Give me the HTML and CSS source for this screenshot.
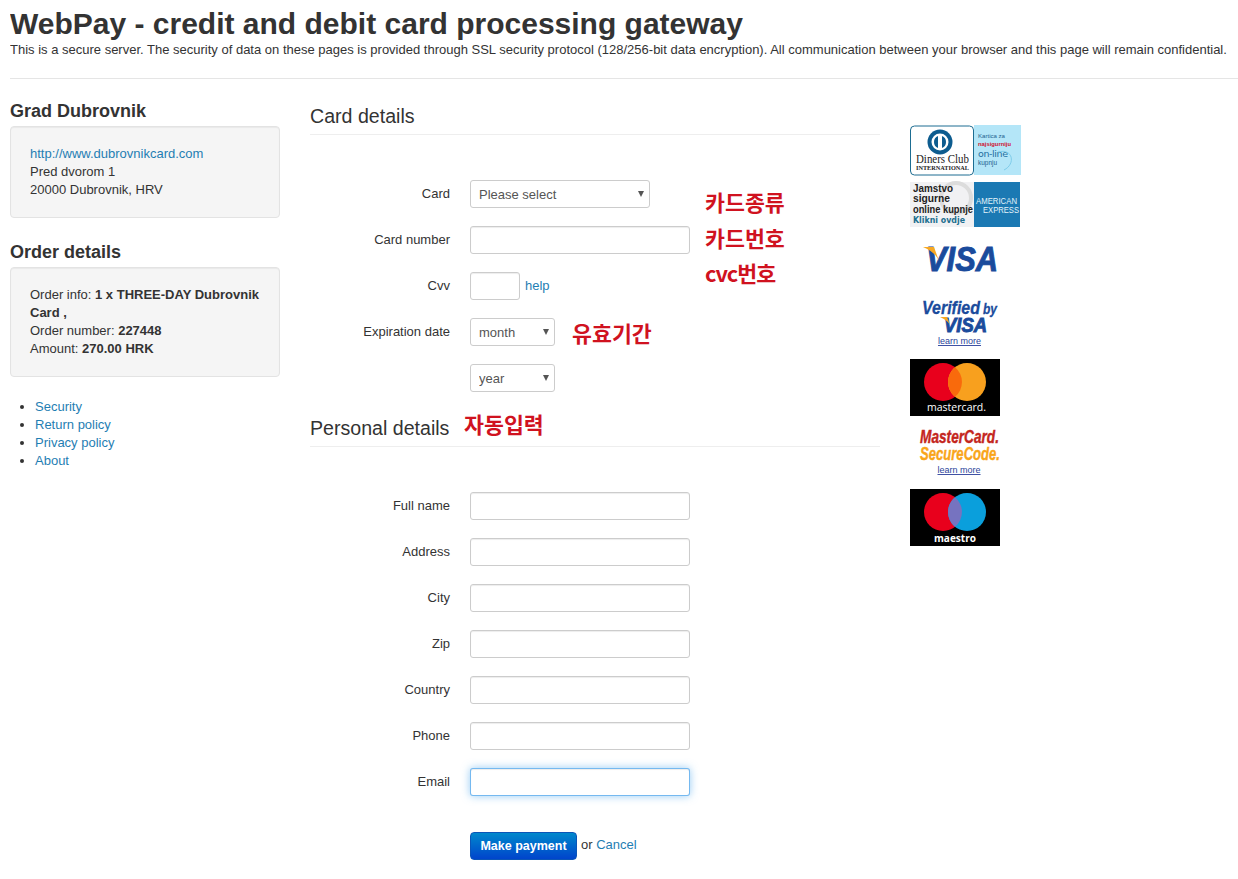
FILE: index.html
```html
<!DOCTYPE html>
<html lang="en">
<head>
<meta charset="UTF-8">
<title>WebPay - credit and debit card processing gateway</title>
<link rel="stylesheet" href="styles.css">
</head>
<body>

<div class="page-header">
    <h1>WebPay - credit and debit card processing gateway</h1>
    <p>This is a secure server. The security of data on these pages is provided through SSL security protocol (128/256-bit data encryption). All communication between your browser and this page will remain confidential.</p>
</div>

<div class="layout">
    <div class="sidebar">
        <h3>Grad Dubrovnik</h3>
        <div class="well">
            <a href="#">http://www.dubrovnikcard.com</a><br>
            Pred dvorom 1<br>
            20000 Dubrovnik, HRV
        </div>
        <h3>Order details</h3>
        <div class="well">
            Order info: <b>1 x THREE-DAY Dubrovnik Card ,</b><br>
            Order number: <b>227448</b><br>
            Amount: <b>270.00 HRK</b>
        </div>
        <ul class="side-links">
            <li><a href="#">Security</a></li>
            <li><a href="#">Return policy</a></li>
            <li><a href="#">Privacy policy</a></li>
            <li><a href="#">About</a></li>
        </ul>
    </div>

    <form class="payment" name="paymentForm">
        <div class="legend">Card details</div>
        <div class="fields">
            <div class="form-row">
                <label for="card">Card</label>
                <div class="select-wrap select-card">
                    <select id="card"><option>Please select</option></select>
                </div>
                <span class="note note-card">카드종류</span>
            </div>
            <div class="form-row">
                <label for="number">Card number</label>
                <input type="text" id="number">
                <span class="note note-number">카드번호</span>
            </div>
            <div class="form-row">
                <label for="cvv">Cvv</label>
                <input type="text" id="cvv" class="input-cvv">
                <a href="#" class="help">help</a>
                <span class="note note-cvc">cvc번호</span>
            </div>
            <div class="form-row">
                <label for="month">Expiration date</label>
                <div class="select-wrap select-date">
                    <select id="month"><option>month</option></select>
                </div>
                <span class="note note-date">유효기간</span>
            </div>
            <div class="form-row">
                <label for="year"></label>
                <div class="select-wrap select-date">
                    <select id="year"><option>year</option></select>
                </div>
            </div>
        </div>

        <div class="legend legend-personal">Personal details <span class="note note-auto">자동입력</span></div>
        <div class="fields">
            <div class="form-row"><label for="fullname">Full name</label><input type="text" id="fullname"></div>
            <div class="form-row"><label for="address">Address</label><input type="text" id="address"></div>
            <div class="form-row"><label for="city">City</label><input type="text" id="city"></div>
            <div class="form-row"><label for="zip">Zip</label><input type="text" id="zip"></div>
            <div class="form-row"><label for="country">Country</label><input type="text" id="country"></div>
            <div class="form-row"><label for="phone">Phone</label><input type="text" id="phone"></div>
            <div class="form-row"><label for="email">Email</label><input type="text" id="email" class="focused"></div>
        </div>

        <div class="actions">
            <button type="button" class="btn-pay">Make payment</button>
            <span class="or-cancel">or <a href="#">Cancel</a></span>
        </div>
    </form>

    <div class="logos">
        <svg class="logo" width="111" height="52" viewBox="0 0 111 52">
            <rect x="64" y="0" width="47" height="50" fill="#b4e6f8"/>
            <rect x="0.5" y="1" width="63" height="49" rx="4" fill="#fff" stroke="#1d6d92"/>
            <circle cx="30" cy="17" r="12.500" fill="#0d5c8f"/>
            <circle cx="30" cy="17" r="8.500" fill="#fff"/>
            <path d="M28 11a6.500 6.500 0 0 0 0 12z M32 11a6.500 6.500 0 0 1 0 12z" fill="#0d5c8f"/>
            <text class="t-serif" x="6" y="38" font-size="13" textLength="53" lengthAdjust="spacingAndGlyphs">Diners Club</text>
            <text class="t-serif-bold" x="6" y="44.500" font-size="6" textLength="53" lengthAdjust="spacingAndGlyphs">INTERNATIONAL</text>
            <text class="t-kartica" x="68" y="13" font-size="6" textLength="27" lengthAdjust="spacingAndGlyphs">Kartica za</text>
            <text class="t-red" x="68" y="21" font-size="6" textLength="33" lengthAdjust="spacingAndGlyphs">najsigurniju</text>
            <text class="t-online" x="68" y="32" font-size="9.500" textLength="30" lengthAdjust="spacing">on-line</text>
            <text class="t-kartica" x="68" y="40" font-size="6.500" textLength="19" lengthAdjust="spacingAndGlyphs">kupnju</text>
            <path d="M88 27c15-4 18 12 6 18" fill="none" stroke="#7fcdea"/>
        </svg>
        <svg class="logo logo-second" width="111" height="46" viewBox="0 0 111 46">
            <rect x="0" y="0" width="64" height="45" fill="#f1f1f3"/>
            <circle cx="46" cy="16" r="15" fill="none" stroke="#dcdcdc" stroke-width="4"/>
            <rect x="64" y="0" width="46" height="45" fill="#1b79b3"/>
            <text class="t-jam" x="3" y="10" font-size="11" textLength="40" lengthAdjust="spacingAndGlyphs">Jamstvo</text>
            <text class="t-jam" x="3" y="20" font-size="11" textLength="37" lengthAdjust="spacingAndGlyphs">sigurne</text>
            <text class="t-jam" x="3" y="31" font-size="11" textLength="60" lengthAdjust="spacingAndGlyphs">online kupnje</text>
            <text class="t-klik" x="3" y="41" font-size="9" textLength="52" lengthAdjust="spacingAndGlyphs">Klikni ovdje</text>
            <text class="t-amex" x="66" y="22" font-size="8.500" textLength="41" lengthAdjust="spacingAndGlyphs">AMERICAN</text>
            <text class="t-amex" x="73" y="31" font-size="8.500" textLength="36" lengthAdjust="spacingAndGlyphs">EXPRESS</text>
        </svg>
        <svg class="logo logo-visa" width="111" height="33" viewBox="0 0 111 33">
            <text class="t-visa" x="16" y="31" font-size="35" textLength="72" lengthAdjust="spacingAndGlyphs">VISA</text>
            <path d="M13 7h11l5 14C26 14 20 10 13 7z" fill="#f7a823"/>
        </svg>
        <svg class="logo logo-verified" width="111" height="54" viewBox="0 0 111 54">
            <text class="t-verified" x="12" y="19" font-size="18" textLength="58" lengthAdjust="spacingAndGlyphs">Verified</text>
            <text class="t-verified" x="73" y="19" font-size="14" textLength="14" lengthAdjust="spacingAndGlyphs">by</text>
            <text class="t-visa" x="34" y="37" font-size="21" textLength="43" lengthAdjust="spacingAndGlyphs">VISA</text>
            <path d="M30 22h7l3 8c-2-4-6-6-10-8z" fill="#f7a823"/>
            <text class="t-learn" x="49.500" y="49" font-size="9" text-anchor="middle">learn more</text>
        </svg>
        <svg class="logo logo-mc" width="90" height="57" viewBox="0 0 90 57">
            <rect width="90" height="57" fill="#000"/>
            <circle cx="33" cy="23" r="19" fill="#e8001c"/>
            <circle cx="57" cy="23" r="19" fill="#f8a01e"/>
            <path d="M45 8.300a19 19 0 0 1 0 29.400a19 19 0 0 1 0-29.400z" fill="#f96a0c"/>
            <text class="t-mark" x="17" y="52" font-size="11" textLength="59" lengthAdjust="spacingAndGlyphs">mastercard.</text>
        </svg>
        <svg class="logo logo-secure" width="111" height="53" viewBox="0 0 111 53">
            <text class="t-mcred" x="10" y="18" font-size="18" textLength="79" lengthAdjust="spacingAndGlyphs">MasterCard.</text>
            <text class="t-mcorange" x="10" y="35" font-size="18" textLength="80" lengthAdjust="spacingAndGlyphs">SecureCode.</text>
            <text class="t-learn" x="49" y="48" font-size="9" text-anchor="middle">learn more</text>
        </svg>
        <svg class="logo logo-maestro" width="90" height="57" viewBox="0 0 90 57">
            <rect width="90" height="57" fill="#000"/>
            <circle cx="33" cy="23" r="19" fill="#e8001c"/>
            <circle cx="57" cy="23" r="19" fill="#0a9fdc"/>
            <path d="M45 8.300a19 19 0 0 1 0 29.400a19 19 0 0 1 0-29.400z" fill="#7673c0"/>
            <text class="t-mark t-maestro" x="24" y="53" font-size="11" textLength="42" lengthAdjust="spacingAndGlyphs">maestro</text>
        </svg>
    </div>
</div>

</body>
</html>
```

FILE: styles.css
```css
body {
    margin: 0;
    padding: 0 0 0 10px;
    font-family: "Liberation Sans", Arial, sans-serif;
    font-size: 13px;
    line-height: 18px;
    color: #333;
    background-color: #fff;
}
a {
    color: #1f7eb3;
    text-decoration: none;
}
.page-header {
    height: 78px;
    border-bottom: 1px solid #e5e5e5;
    overflow: hidden;
}
.page-header h1 {
    margin: 8px 0 0;
    font-size: 30px;
    line-height: 32px;
}
.page-header p {
    margin: 1px 0 0;
    font-size: 13px;
    line-height: 18px;
    white-space: nowrap;
}
.layout {
    display: flex;
    align-items: flex-start;
}
.sidebar {
    width: 270px;
    margin-top: 22px;
    margin-right: 30px;
    flex: none;
}
.sidebar h3 {
    margin: 0 0 5px;
    font-size: 18px;
    line-height: 20px;
}
.well {
    padding: 18px 19px;
    margin-bottom: 24px;
    background-color: #f5f5f5;
    border: 1px solid #e3e3e3;
    border-radius: 4px;
    box-shadow: inset 0 1px 1px rgba(0, 0, 0, 0.05);
}
.side-links {
    margin: -3px 0 0;
    padding-left: 25px;
}
.payment {
    width: 570px;
    margin-top: 22px;
    margin-right: 30px;
    flex: none;
}
.legend {
    position: relative;
    font-size: 19.600px;
    line-height: 30px;
    padding-bottom: 3px;
    border-bottom: 1px solid #eee;
}
.legend-personal {
    margin-top: 21px;
}
.fields {
    padding-top: 45px;
}
.form-row {
    position: relative;
    display: flex;
    align-items: center;
    height: 28px;
    margin-bottom: 18px;
}
.form-row label {
    width: 140px;
    margin-right: 20px;
    text-align: right;
    flex: none;
}
input[type="text"] {
    width: 220px;
    height: 28px;
    box-sizing: border-box;
    padding: 4px;
    border: 1px solid #ccc;
    border-radius: 3px;
    box-shadow: inset 0 1px 1px rgba(0, 0, 0, 0.075);
    outline: none;
}
input.input-cvv {
    width: 50px;
}
input.focused {
    border-color: rgba(82, 168, 236, 0.8);
    box-shadow: inset 0 1px 1px rgba(0, 0, 0, 0.075), 0 0 8px rgba(82, 168, 236, 0.6);
}
.help {
    margin-left: 5px;
}
.select-wrap {
    position: relative;
    height: 28px;
}
.select-wrap::after {
    content: "";
    position: absolute;
    right: 6px;
    top: 11px;
    border-left: 3.500px solid transparent;
    border-right: 3.500px solid transparent;
    border-top: 6px solid #555;
    pointer-events: none;
}
.select-card {
    width: 180px;
}
.select-date {
    width: 85px;
}
select {
    appearance: none;
    width: 100%;
    height: 28px;
    box-sizing: border-box;
    padding: 0 8px;
    border: 1px solid #ccc;
    border-radius: 3px;
    background-color: #fff;
    color: #555;
    font-family: inherit;
    font-size: 13px;
}
.note {
    position: absolute;
    font-family: "Noto Sans CJK KR", sans-serif;
    font-size: 21.700px;
    font-weight: bold;
    line-height: 24px;
    color: #d0121f;
    white-space: nowrap;
}
.note-card { left: 395px; top: 10px; }
.note-number { left: 395px; top: 0; }
.note-cvc { left: 395px; top: -11px; letter-spacing: -1px; }
.note-date { left: 262px; top: 3px; }
.note-auto { left: 154px; top: -1px; }
.actions {
    display: flex;
    align-items: center;
    gap: 4px;
    margin: 36px 0 0 160px;
}
.btn-pay {
    width: 107px;
    height: 28px;
    padding: 0;
    border: 1px solid #0a55b8;
    border-radius: 4px;
    background: linear-gradient(#0088cc, #0044cc);
    color: #fff;
    font-family: inherit;
    font-size: 12.500px;
    font-weight: bold;
}
.or-cancel {
    padding-bottom: 2px;
}
.logos {
    margin-top: 46px;
    flex: none;
}
.logo {
    display: block;
    overflow: visible;
}
.logo-second { margin-top: 5px; }
.logo-visa { margin-top: 12px; }
.logo-verified { margin-top: 22px; }
.logo-mc { margin-top: 10px; }
.logo-secure { margin-top: 9px; }
.logo-maestro { margin-top: 11px; }

.t-serif { font-family: "Liberation Serif", serif; fill: #222; }
.t-serif-bold { font-family: "Liberation Serif", serif; font-weight: bold; fill: #222; }
.t-kartica { font-family: "Liberation Sans", sans-serif; fill: #1d5f8f; }
.t-red { font-family: "Liberation Sans", sans-serif; font-weight: bold; fill: #d0122f; }
.t-online { font-family: "DejaVu Sans", sans-serif; fill: #1d6f9f; }
.t-jam { font-family: "Liberation Sans", sans-serif; font-weight: bold; fill: #222; }
.t-klik { font-family: "DejaVu Sans", sans-serif; font-weight: bold; fill: #1d6f8f; }
.t-amex { font-family: "Liberation Sans", sans-serif; fill: #e4f4fb; }
.t-visa { font-family: "Liberation Sans", sans-serif; font-weight: bold; font-style: italic; fill: #1a4b9c; stroke: #1a4b9c; stroke-width: 1; }
.t-verified { font-family: "Liberation Sans", sans-serif; font-weight: bold; font-style: italic; fill: #1a4b9c; stroke: #1a4b9c; stroke-width: 0.3; }
.t-learn { font-family: "Liberation Sans", sans-serif; fill: #2b3f9a; text-decoration: underline; }
.t-mark { font-family: "Open Sans", sans-serif; fill: #fff; }
.t-maestro { font-weight: bold; }
.t-mcred { font-family: "Liberation Sans", sans-serif; font-weight: bold; font-style: italic; fill: #c4261d; stroke: #c4261d; stroke-width: 0.4; }
.t-mcorange { font-family: "Liberation Sans", sans-serif; font-weight: bold; font-style: italic; fill: #f9a51a; stroke: #f9a51a; stroke-width: 0.4; }
```
